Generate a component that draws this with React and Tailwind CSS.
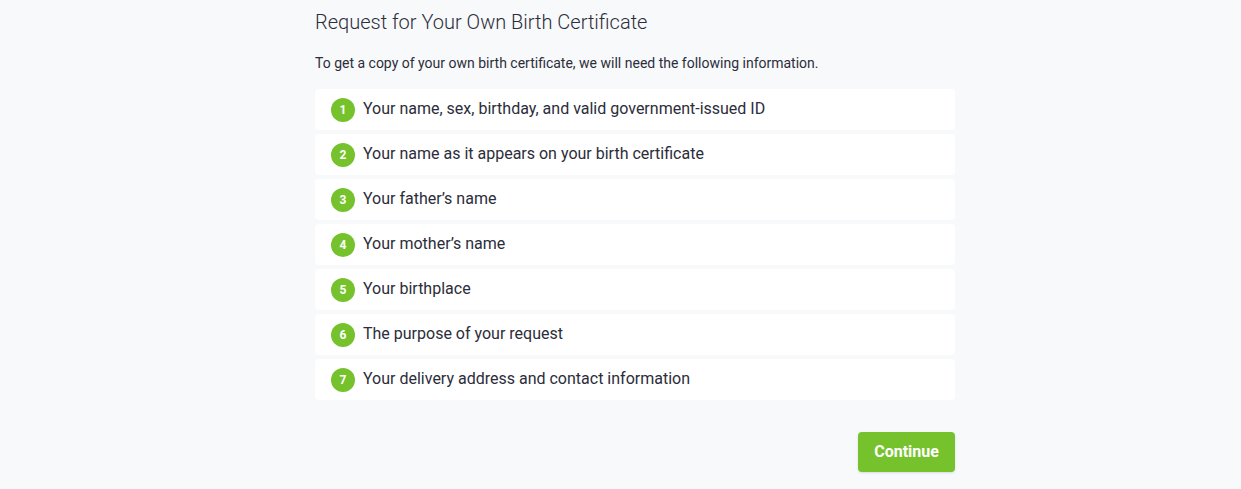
import React from 'react';

const items = [
  'Your name, sex, birthday, and valid government-issued ID',
  'Your name as it appears on your birth certificate',
  'Your father’s name',
  'Your mother’s name',
  'Your birthplace',
  'The purpose of your request',
  'Your delivery address and contact information',
];

const App = () => {
  return (
    <div className="min-h-screen bg-[#f8f9fb] font-['Roboto',sans-serif] text-[#2b2d3a]">
      <div className="ml-[315px] w-[640px] pt-2 pb-[17px]">
        <h1 className="text-[20px] leading-7 font-light text-[#2b2d3a]">
          Request for Your Own Birth Certificate
        </h1>
        <p className="mt-[17px] text-[14px] leading-5">
          To get a copy of your own birth certificate, we will need the following information.
        </p>

        <div className="mt-4 flex flex-col gap-[4px]">
          {items.map((text, i) => (
            <div
              key={i}
              className="flex h-[41px] items-center rounded-[4px] bg-white pl-4"
            >
              <span className="flex h-6 w-6 items-center justify-center rounded-full bg-[#76c22d] text-[12px] font-bold text-white">
                {i + 1}
              </span>
              <span className="ml-2 -translate-y-px text-[16px]">{text}</span>
            </div>
          ))}
        </div>

        <div className="mt-8 flex justify-end">
          <button className="h-10 w-[97px] rounded-[4px] bg-[#76c22d] text-[16px] font-bold text-white shadow-sm">
            Continue
          </button>
        </div>
      </div>
    </div>
  );
};

export default App;
